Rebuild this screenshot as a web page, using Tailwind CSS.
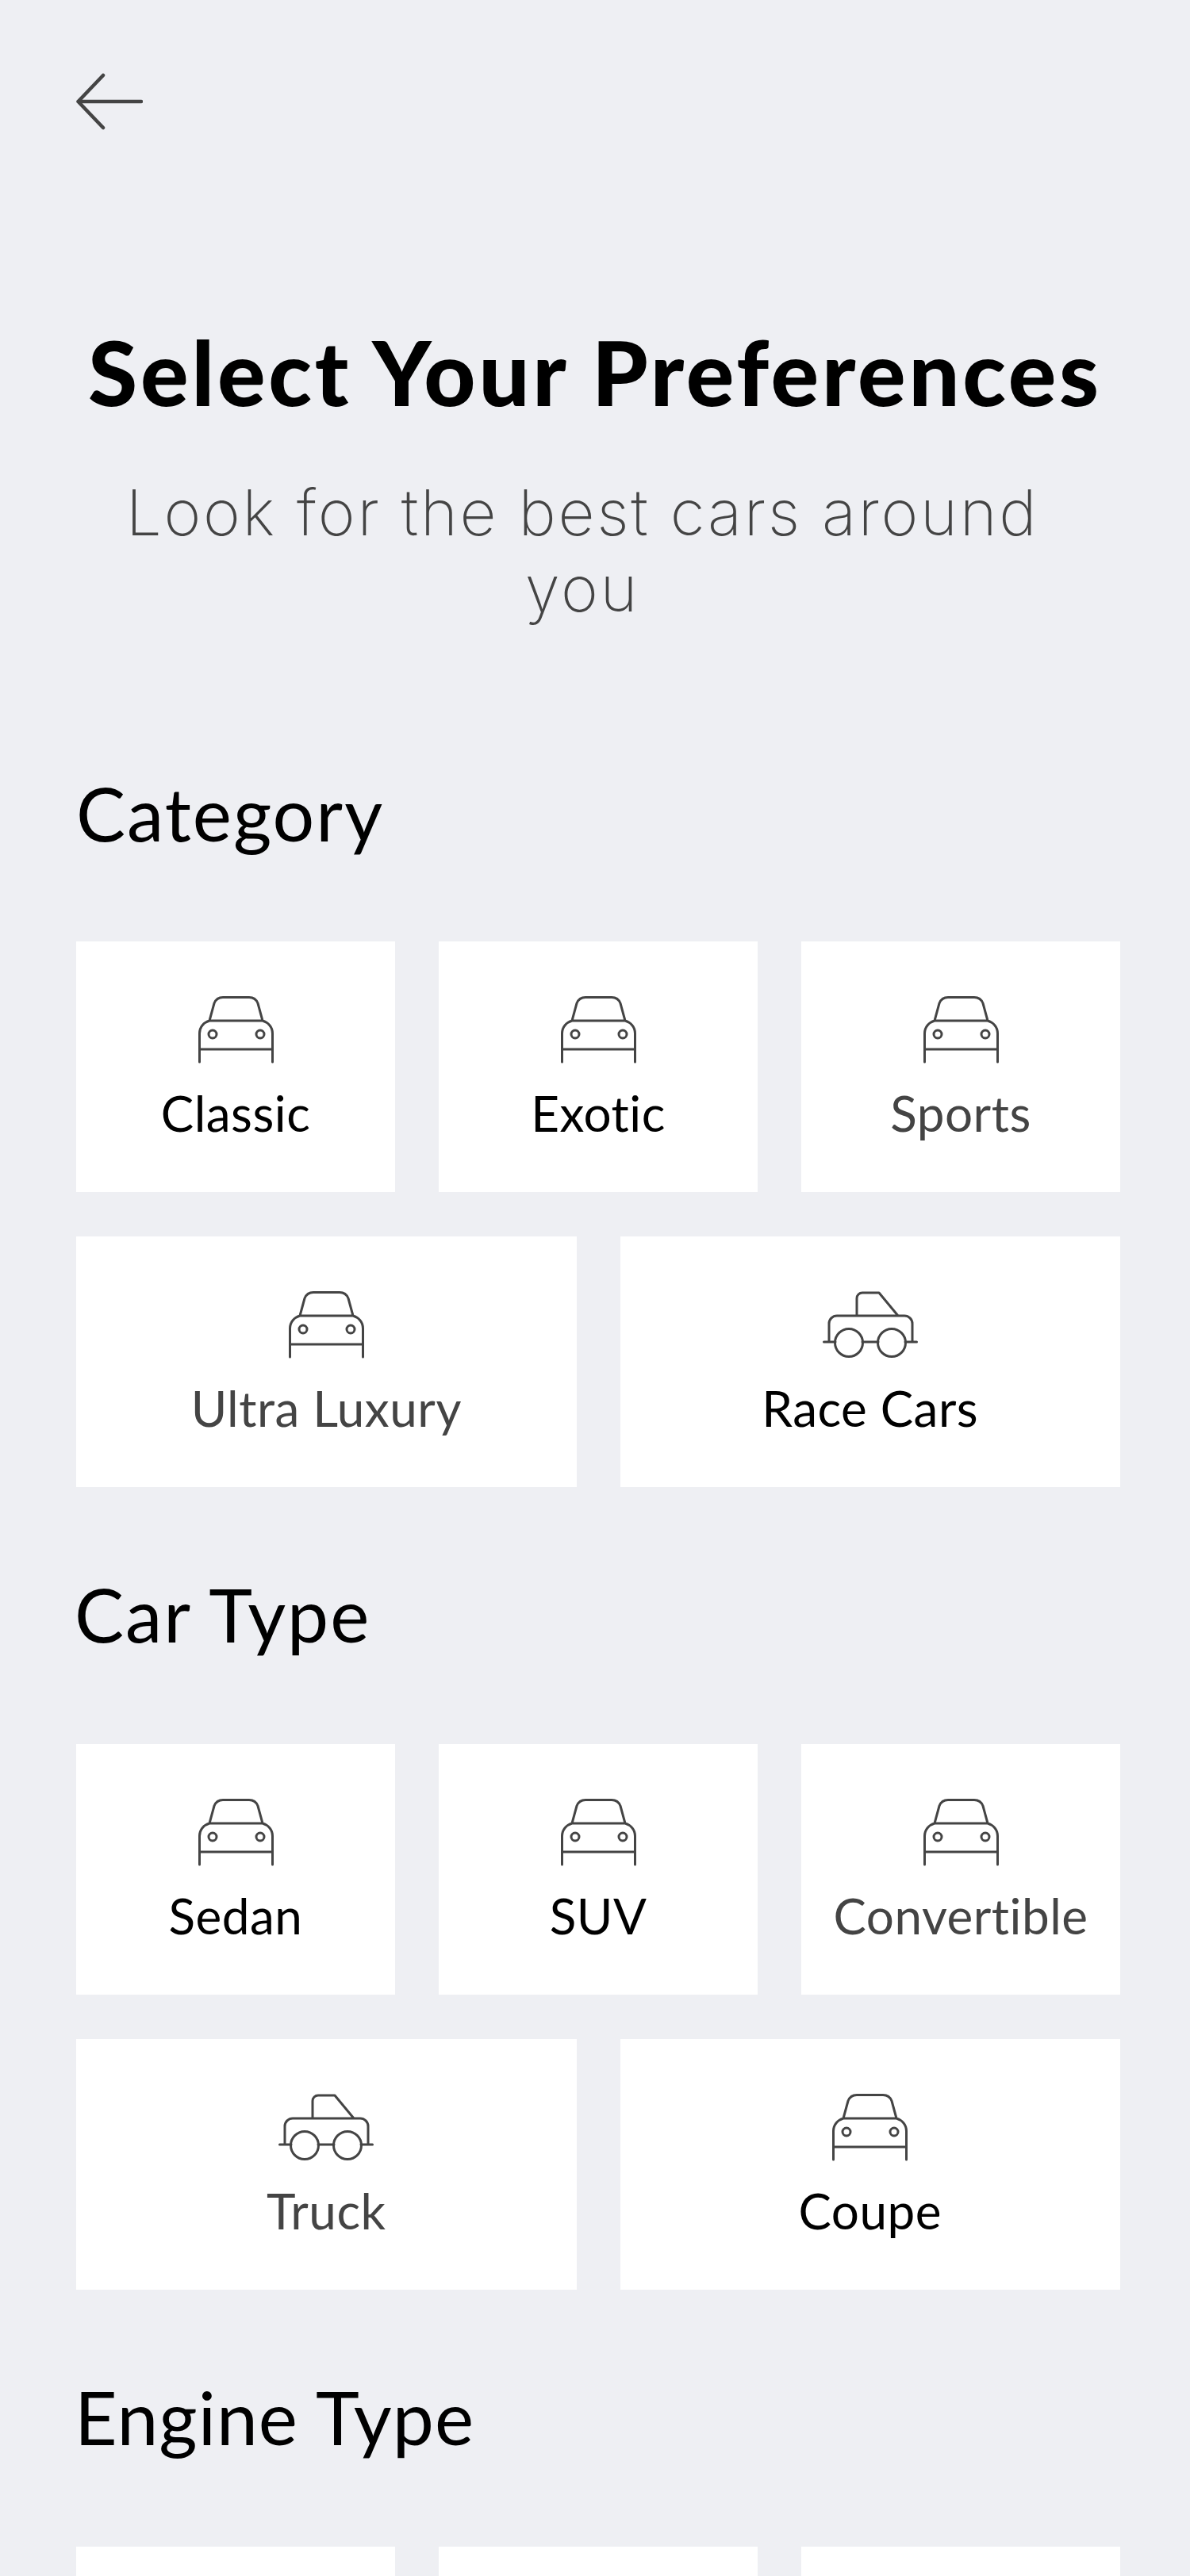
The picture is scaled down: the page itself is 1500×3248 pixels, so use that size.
<html>
<head>
    <title>Select Your Preferences</title>
    <script src="https://cdn.jsdelivr.net/npm/@tailwindcss/browser@4"></script>
</head>
<body class="bg-[#eeeff3]">
    <!-- shared icons -->
    <svg class="hidden">
        <symbol id="car" viewBox="0 0 97 86">
            <path d="M2.5 84V48C2.5 40 8 34 15 32H82C89 34 94.5 40 94.5 48V84M2.5 68H94.5M15 32L21 10C23 5 27 2.5 32 2.5H65C70 2.5 74 5 76 10L82 32" fill="none" stroke="#444" stroke-width="3" stroke-linecap="round" stroke-linejoin="round"/>
            <circle cx="19" cy="49" r="5" fill="none" stroke="#444" stroke-width="3"/>
            <circle cx="79" cy="49" r="5" fill="none" stroke="#444" stroke-width="3"/>
        </symbol>
        <symbol id="truck" viewBox="0 0 120 86">
            <path d="M43 32V10a7 7 0 0 1 7-7H71L95 32M8 65V42a10 10 0 0 1 10-10H103a10 10 0 0 1 10 10V65M1.5 65H16M50 65H70M104 65H118.5" fill="none" stroke="#444" stroke-width="3" stroke-linecap="round" stroke-linejoin="round"/>
            <circle cx="33" cy="66" r="17.5" fill="none" stroke="#444" stroke-width="3"/>
            <circle cx="87" cy="66" r="17.5" fill="none" stroke="#444" stroke-width="3"/>
        </symbol>
    </svg>

    <div class="h-[3248px] overflow-hidden font-['Lato',sans-serif]">
        <div class="pt-[92px] pl-[96px]">
            <svg class="w-[84px] h-[72px]" viewBox="0 0 84 72"><path d="M34 3L2.5 36L34 69M2.5 36H82" fill="none" stroke="#444" stroke-width="4.5" stroke-linecap="round" stroke-linejoin="round"/></svg>
        </div>

        <div class="mt-[239px] text-center">
            <h1 class="text-[113px] leading-[130px] font-black text-black tracking-[3.8px]">Select Your Preferences</h1>
            <p class="mt-[65px] ml-[134px] w-[1200px] font-['Inter',sans-serif] text-[80px] leading-[96px] font-extralight text-[#444] tracking-[2.7px]">Look for the best cars around you</p>
        </div>

        <div class="ml-[96px] w-[1316px]">
            <h2 class="mt-[179px] h-[218px] text-[93px] leading-[112px] text-black tracking-[2px]">Category</h2>
            <div class="grid grid-cols-3 gap-x-[55px]">
                <div class="h-[316px] bg-white pt-[68px] flex flex-col items-center"><svg class="w-[97px] h-[86px]"><use href="#car"/></svg><span class="mt-[24px] text-[62px] leading-[76px] text-black tracking-[0.5px]">Classic</span></div>
                <div class="h-[316px] bg-white pt-[68px] flex flex-col items-center"><svg class="w-[97px] h-[86px]"><use href="#car"/></svg><span class="mt-[24px] text-[62px] leading-[76px] text-black tracking-[0.5px]">Exotic</span></div>
                <div class="h-[316px] bg-white pt-[68px] flex flex-col items-center"><svg class="w-[97px] h-[86px]"><use href="#car"/></svg><span class="mt-[24px] text-[62px] leading-[76px] text-[#444] tracking-[0.5px]">Sports</span></div>
            </div>
            <div class="grid grid-cols-2 gap-x-[55px] mt-[56px]">
                <div class="h-[316px] bg-white pt-[68px] flex flex-col items-center"><svg class="w-[97px] h-[86px]"><use href="#car"/></svg><span class="mt-[24px] text-[62px] leading-[76px] text-[#444] tracking-[0.5px]">Ultra Luxury</span></div>
                <div class="h-[316px] bg-white pt-[68px] flex flex-col items-center"><svg class="w-[120px] h-[86px]"><use href="#truck"/></svg><span class="mt-[24px] text-[62px] leading-[76px] text-black tracking-[0.5px]">Race Cars</span></div>
            </div>

            <h2 class="mt-[104px] h-[220px] text-[93px] leading-[112px] text-black tracking-[2px] -ml-[2px]">Car Type</h2>
            <div class="grid grid-cols-3 gap-x-[55px]">
                <div class="h-[316px] bg-white pt-[68px] flex flex-col items-center"><svg class="w-[97px] h-[86px]"><use href="#car"/></svg><span class="mt-[24px] text-[62px] leading-[76px] text-black tracking-[0.5px]">Sedan</span></div>
                <div class="h-[316px] bg-white pt-[68px] flex flex-col items-center"><svg class="w-[97px] h-[86px]"><use href="#car"/></svg><span class="mt-[24px] text-[62px] leading-[76px] text-black tracking-[0.5px]">SUV</span></div>
                <div class="h-[316px] bg-white pt-[68px] flex flex-col items-center"><svg class="w-[97px] h-[86px]"><use href="#car"/></svg><span class="mt-[24px] text-[62px] leading-[76px] text-[#444] tracking-[0.5px]">Convertible</span></div>
            </div>
            <div class="grid grid-cols-2 gap-x-[55px] mt-[56px]">
                <div class="h-[316px] bg-white pt-[68px] flex flex-col items-center"><svg class="w-[120px] h-[86px]"><use href="#truck"/></svg><span class="mt-[24px] text-[62px] leading-[76px] text-[#444] tracking-[0.5px]">Truck</span></div>
                <div class="h-[316px] bg-white pt-[68px] flex flex-col items-center"><svg class="w-[97px] h-[86px]"><use href="#car"/></svg><span class="mt-[24px] text-[62px] leading-[76px] text-black tracking-[0.5px]">Coupe</span></div>
            </div>

            <h2 class="mt-[104px] h-[220px] text-[93px] leading-[112px] text-black tracking-[1px] -ml-[2px]">Engine Type</h2>
            <div class="grid grid-cols-3 gap-x-[55px]">
                <div class="h-[316px] bg-white"></div>
                <div class="h-[316px] bg-white"></div>
                <div class="h-[316px] bg-white"></div>
            </div>
        </div>
    </div>
</body>
</html>
